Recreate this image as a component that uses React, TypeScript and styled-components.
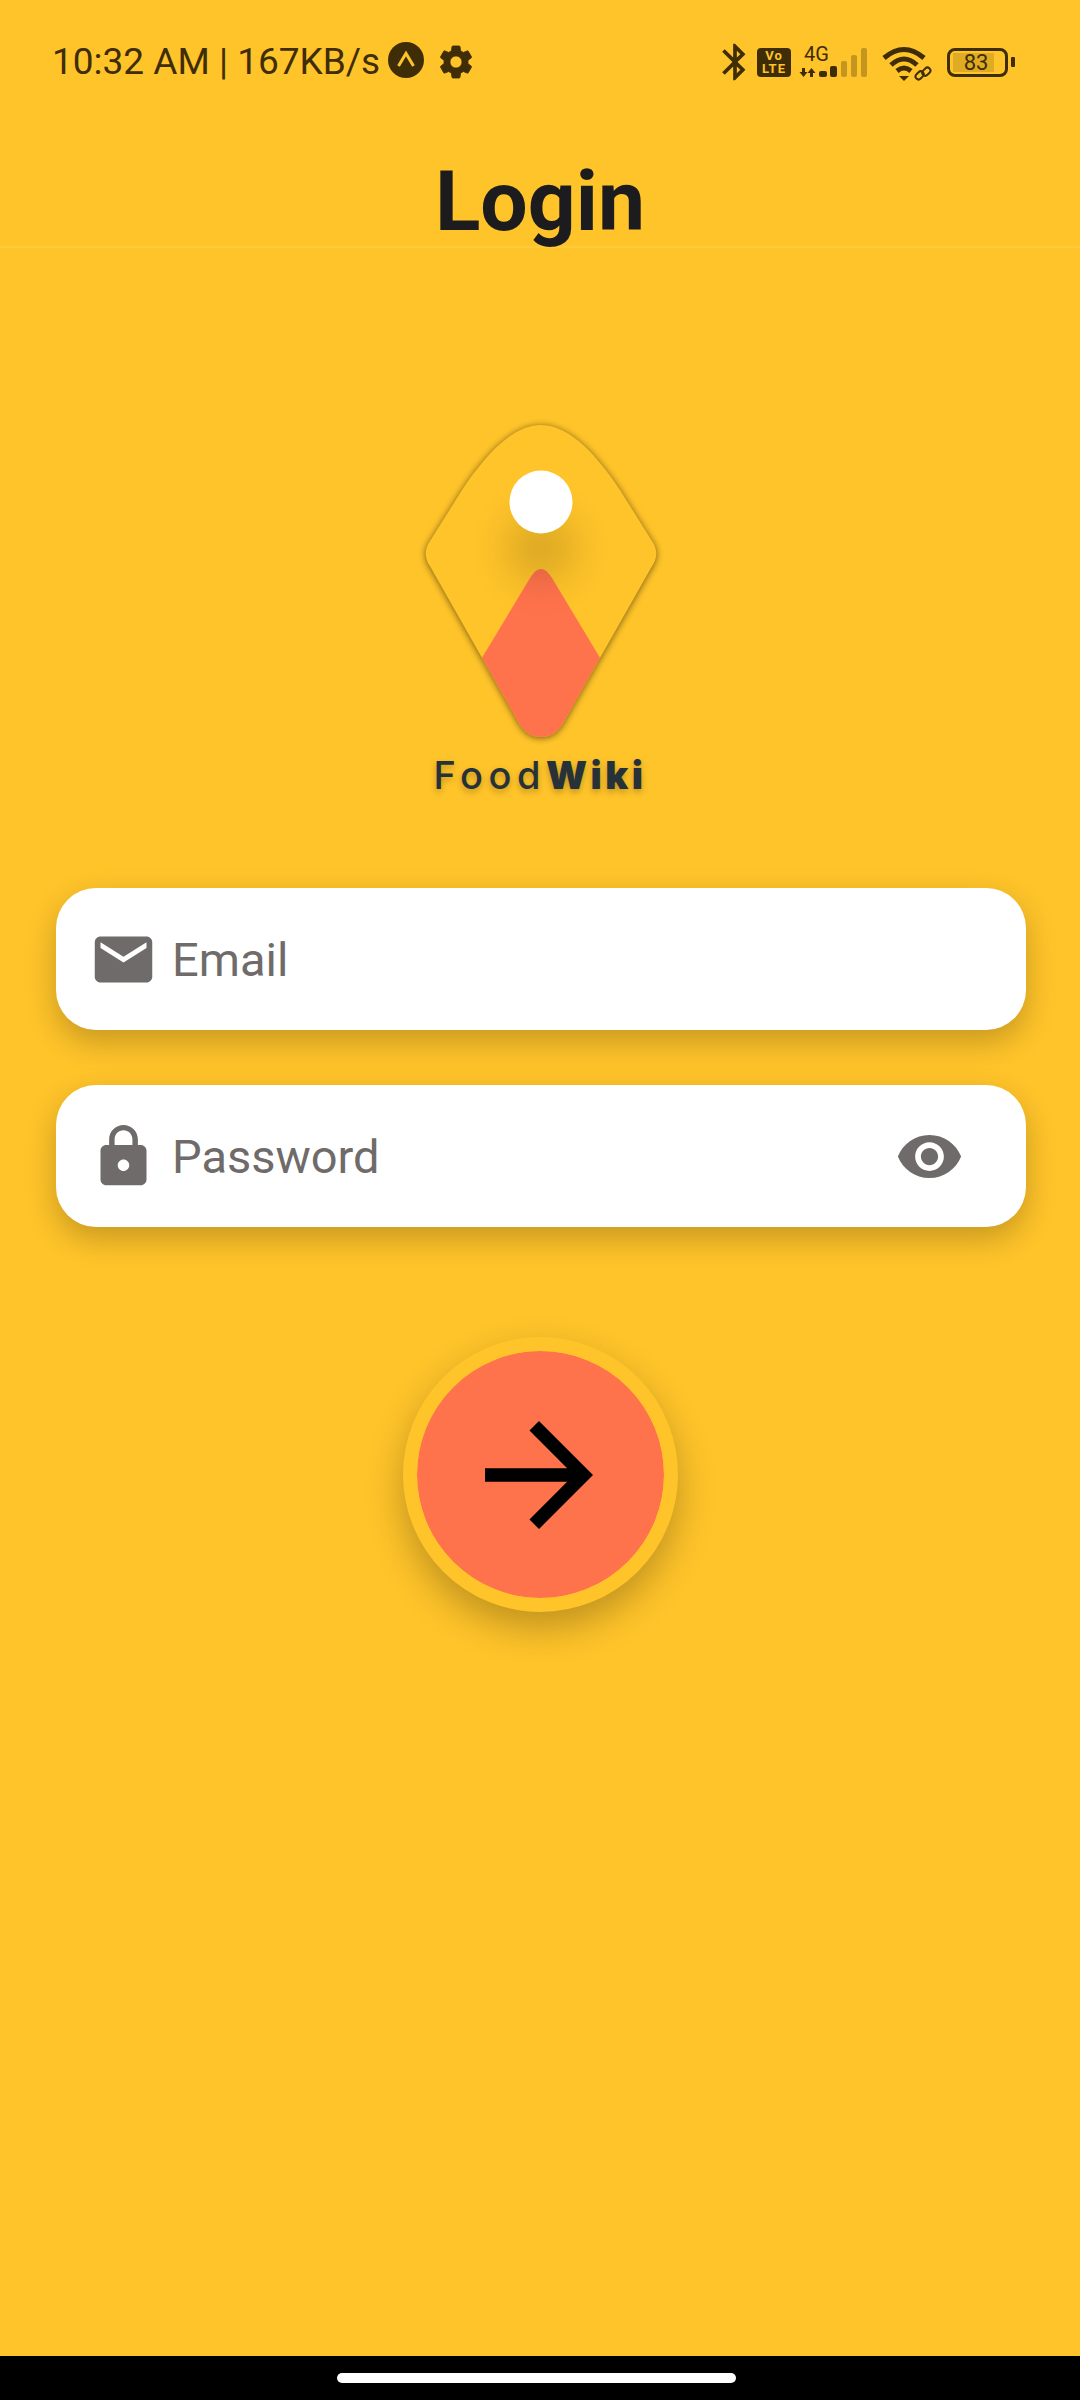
import React from "react";
import styled, { createGlobalStyle } from "styled-components";

const GlobalStyle = createGlobalStyle`
  html, body {
    margin: 0;
    padding: 0;
    background: #ffc42a;
    font-family: Roboto, "Liberation Sans", sans-serif;
  }
`;

const Page = styled.div`
  width: 1080px;
  height: 2400px;
  display: flex;
  flex-direction: column;
  overflow: hidden;
  background: #ffc42a;
`;

const StatusBar = styled.div`
  height: 124px;
  flex: none;
  display: flex;
  align-items: center;
  justify-content: space-between;
  padding: 0 65px 0 52px;
  color: #3f2d08;
`;

const StatusLeft = styled.div`
  display: flex;
  align-items: center;
`;

const StatusTime = styled.span`
  font-size: 37px;
  line-height: 44px;
  white-space: nowrap;
`;

const ExpoBadge = styled.svg`
  width: 36px;
  height: 36px;
  margin: 0 0 4px 8px;
`;

const GearIcon = styled.svg`
  width: 40px;
  height: 40px;
  margin: 0 0 0 12px;
  fill: #3f2d08;
  stroke: #3f2d08;
  stroke-width: 0.5;
`;

const StatusRight = styled.div`
  display: flex;
  align-items: center;
`;

const BluetoothIcon = styled.svg`
  width: 44px;
  height: 44px;
  fill: #3f2d08;
`;

const VoLteBadge = styled.div`
  width: 34px;
  height: 29px;
  border-radius: 4px;
  background: #3f2d08;
  color: #ffc42a;
  display: flex;
  flex-direction: column;
  align-items: center;
  justify-content: center;
  font-size: 13px;
  line-height: 13px;
  font-weight: 700;
  letter-spacing: 1px;
`;

const NetworkIcon = styled.svg`
  width: 70px;
  height: 38px;
  margin-left: 8px;
`;

const WifiIcon = styled.svg`
  width: 52px;
  height: 38px;
  margin-left: 11px;
`;

const Battery = styled.div`
  width: 61px;
  height: 29px;
  box-sizing: border-box;
  margin-left: 15px;
  border: 3.5px solid #3f2d08;
  border-radius: 8px;
  padding: 2px 0 2px 2.5px;
  display: flex;
`;

const BatteryLevel = styled.div`
  width: 41px;
  box-sizing: border-box;
  padding-left: 6px;
  background: rgba(63, 45, 8, 0.17);
  display: flex;
  align-items: center;
  justify-content: center;
  font-size: 22px;
  color: #3f2d08;
`;

const BatteryNub = styled.div`
  width: 4px;
  height: 10px;
  margin-left: 3px;
  border-radius: 1px;
  background: #3f2d08;
`;

const Header = styled.header`
  height: 124px;
  flex: none;
  box-sizing: border-box;
  display: flex;
  justify-content: center;
  border-bottom: 2px solid #ffca3c;
`;

const Title = styled.h1`
  margin: 36px 0 0;
  font-size: 84px;
  line-height: 84px;
  font-weight: 700;
  color: #1c1c1e;
`;

const LogoBlock = styled.div`
  margin-top: 162px;
  display: flex;
  flex-direction: column;
  align-items: center;
`;

const LogoMark = styled.svg`
  width: 260px;
  height: 340px;
  display: block;
`;

const Brand = styled.div`
  margin-top: 3px;
  font-family: Inter, Lato, sans-serif;
  font-size: 38px;
  line-height: 44px;
  font-weight: 500;
  letter-spacing: 5.5px;
  color: #263238;
  text-shadow: 0 3px 6px rgba(0, 0, 0, 0.25);
`;

const BrandBold = styled.b`
  font-weight: 900;
  letter-spacing: 3.5px;
`;

const Form = styled.form`
  margin: 91px 54px 0 56px;
  display: flex;
  flex-direction: column;
  gap: 55px;
`;

const Field = styled.div`
  height: 142px;
  border-radius: 40px;
  background: #fff;
  box-shadow: 0 12px 30px rgba(0, 0, 0, 0.22);
  display: flex;
  align-items: center;
  padding: 0 62px 0 33px;
`;

const FieldIcon = styled.svg`
  width: 69px;
  height: 69px;
  flex: none;
  fill: #6f6b6a;
`;

const FieldInput = styled.input`
  flex: 1;
  min-width: 0;
  margin-left: 14px;
  border: 0;
  padding: 0;
  outline: 0;
  background: transparent;
  font-family: Roboto, sans-serif;
  font-size: 47px;
  color: #6f6b6a;

  &::placeholder {
    color: #6f6b6a;
    opacity: 1;
  }
`;

const SubmitButton = styled.button`
  width: 275px;
  height: 275px;
  box-sizing: border-box;
  margin: 110px auto 0;
  padding: 0 3px 0 0;
  border: 14px solid #ffc42a;
  border-radius: 50%;
  background: #ff734c;
  background-clip: padding-box;
  box-shadow: 0 16px 36px rgba(0, 0, 0, 0.25);
  display: flex;
  align-items: center;
  justify-content: center;
  align-self: center;
`;

const ArrowIcon = styled.svg`
  width: 162px;
  height: 162px;
  flex: none;
  fill: #000;
`;

const NavBar = styled.div`
  height: 44px;
  flex: none;
  margin-top: auto;
  background: #000;
  display: flex;
  justify-content: center;
  padding: 17px 7px 0 0;
  box-sizing: border-box;
`;

const NavPill = styled.div`
  width: 399px;
  height: 10px;
  border-radius: 5px;
  background: #fff;
`;

const bodyPath =
  "M541 425C572 425 600 460 620 490L652 541Q661 554 651 568L562 725C556 734 549 737 541 737C533 737 526 734 520 725L431 568Q421 554 430 541L462 490C482 460 510 425 541 425Z";

const App = () => {
  return (
    <Page>
      <GlobalStyle />
      <StatusBar>
        <StatusLeft>
          <StatusTime>10:32 AM | 167KB/s</StatusTime>
          <ExpoBadge viewBox="0 0 36 36">
            <circle cx="18" cy="18" r="18" fill="#3f2d08" />
            <path
              d="M10.5 24L18 11.5L25.5 24"
              fill="none"
              stroke="#ffc42a"
              strokeWidth="3"
            />
          </ExpoBadge>
          <GearIcon viewBox="0 0 24 24">
            <path d="M19.14 12.94c.04-.3.06-.61.06-.94 0-.32-.02-.64-.07-.94l2.03-1.58c.18-.14.23-.41.12-.61l-1.92-3.32c-.12-.22-.37-.29-.59-.22l-2.39.96c-.5-.38-1.03-.7-1.62-.94l-.36-2.54c-.04-.24-.24-.41-.48-.41h-3.84c-.24 0-.43.17-.47.41l-.36 2.54c-.59.24-1.13.57-1.62.94l-2.39-.96c-.22-.08-.47 0-.59.22L2.74 8.87c-.12.21-.08.47.12.61l2.03 1.58c-.05.3-.09.63-.09.94s.02.64.07.94l-2.03 1.58c-.18.14-.23.41-.12.61l1.92 3.32c.12.22.37.29.59.22l2.39-.96c.5.38 1.03.7 1.62.94l.36 2.54c.05.24.24.41.48.41h3.84c.24 0 .44-.17.47-.41l.36-2.54c.59-.24 1.13-.56 1.62-.94l2.39.96c.22.08.47 0 .59-.22l1.92-3.32c.12-.22.07-.47-.12-.61l-2.01-1.58zM12 15.6c-1.98 0-3.6-1.62-3.6-3.6s1.62-3.6 3.6-3.6 3.6 1.62 3.6 3.6-1.62 3.6-3.6 3.6z" />
          </GearIcon>
        </StatusLeft>
        <StatusRight>
          <BluetoothIcon viewBox="0 0 24 24">
            <path d="M17.71 7.71L12 2h-1v7.59L6.41 5 5 6.41 10.59 12 5 17.59 6.41 19 11 14.41V22h1l5.71-5.71-4.3-4.29 4.3-4.29zM13 5.83l1.88 1.88L13 9.59V5.83zm1.88 10.46L13 18.17v-3.76l1.88 1.88z" />
          </BluetoothIcon>
          <VoLteBadge>
            <span>Vo</span>
            <span>LTE</span>
          </VoLteBadge>
          <NetworkIcon viewBox="799 40 70 38">
            <text x="804" y="58" fontFamily="Roboto" fontSize="20" fill="#3f2d08">
              4G
            </text>
            <path
              d="M802 65h3v4h2.5l-4 5-4-5h2.5zM810 74h3v-4h2.5l-4-5-4 5h2.5z"
              fill="#3f2d08"
            />
            <rect x="819" y="68" width="8" height="6" rx="2" fill="#3f2d08" />
            <rect x="830" y="63" width="7" height="11" rx="2" fill="#3f2d08" />
            <g fill="#3f2d08" opacity="0.3">
              <rect x="841" y="58" width="6" height="16" rx="2" />
              <rect x="851" y="52" width="6" height="22" rx="2" />
              <rect x="861" y="45" width="6" height="29" rx="2" />
            </g>
          </NetworkIcon>
          <WifiIcon viewBox="880 40 52 38">
            <g fill="none" stroke="#3f2d08" strokeWidth="5">
              <path d="M884 55Q904 38 924 55" />
              <path d="M891 62Q904 50 917 62" />
              <path d="M897 68Q904 62 911 68" />
            </g>
            <path d="M899 73L909 73L904 78Z" fill="#3f2d08" />
            <g fill="none" stroke="#3f2d08" strokeWidth="2">
              <rect x="915" y="69" width="9" height="6" rx="3" transform="rotate(-45 920 72)" />
              <rect x="922" y="66" width="9" height="6" rx="3" transform="rotate(-45 926 69)" />
            </g>
          </WifiIcon>
          <Battery>
            <BatteryLevel>83</BatteryLevel>
          </Battery>
          <BatteryNub />
        </StatusRight>
      </StatusBar>

      <Header>
        <Title>Login</Title>
      </Header>

      <LogoBlock>
        <LogoMark viewBox="410 410 260 340">
          <defs>
            <filter id="bodyShadow" x="-20%" y="-20%" width="140%" height="140%">
              <feGaussianBlur stdDeviation="3.5" />
            </filter>
            <filter id="dotShadow" x="-100%" y="-100%" width="300%" height="300%">
              <feGaussianBlur stdDeviation="20" />
            </filter>
            <clipPath id="bodyClip">
              <path d={bodyPath} />
            </clipPath>
          </defs>
          <path
            d={bodyPath}
            fill="#000"
            opacity="0.55"
            filter="url(#bodyShadow)"
            transform="translate(0 1)"
          />
          <path d={bodyPath} fill="#ffc42a" />
          <g clipPath="url(#bodyClip)">
            <path
              d="M530 578Q541 560 552 578L620 691L620 760L462 760L462 691Z"
              fill="#ff734c"
            />
            <circle cx="541" cy="548" r="34" fill="#000" opacity="0.15" filter="url(#dotShadow)" />
          </g>
          <circle cx="541" cy="502" r="31.5" fill="#fff" />
        </LogoMark>
        <Brand>
          Food<BrandBold>Wiki</BrandBold>
        </Brand>
      </LogoBlock>

      <Form>
        <Field>
          <FieldIcon viewBox="0 0 24 24">
            <path d="M20 4H4c-1.1 0-1.99.9-1.99 2L2 18c0 1.1.9 2 2 2h16c1.1 0 2-.9 2-2V6c0-1.1-.9-2-2-2zm0 4l-8 5-8-5V6l8 5 8-5v2z" />
          </FieldIcon>
          <FieldInput type="email" placeholder="Email" />
        </Field>
        <Field>
          <FieldIcon viewBox="0 0 24 24">
            <path d="M18 8h-1V6c0-2.76-2.24-5-5-5S7 3.24 7 6v2H6c-1.1 0-2 .9-2 2v10c0 1.1.9 2 2 2h12c1.1 0 2-.9 2-2V10c0-1.1-.9-2-2-2zm-6 9c-1.1 0-2-.9-2-2s.9-2 2-2 2 .9 2 2-.9 2-2 2zm3.1-9H8.9V6c0-1.71 1.39-3.1 3.1-3.1 1.71 0 3.1 1.39 3.1 3.1v2z" />
          </FieldIcon>
          <FieldInput type="password" placeholder="Password" />
          <FieldIcon viewBox="0 0 24 24">
            <path d="M12 4.5C7 4.5 2.73 7.61 1 12c1.73 4.39 6 7.5 11 7.5s9.27-3.11 11-7.5c-1.73-4.39-6-7.5-11-7.5zM12 17c-2.76 0-5-2.24-5-5s2.24-5 5-5 5 2.24 5 5-2.24 5-5 5zm0-8c-1.66 0-3 1.34-3 3s1.34 3 3 3 3-1.34 3-3-1.34-3-3-3z" />
          </FieldIcon>
        </Field>
      </Form>

      <SubmitButton type="button">
        <ArrowIcon viewBox="0 0 24 24">
          <path d="M12 4l-1.41 1.41L16.17 11H4v2h12.17l-5.58 5.59L12 20l8-8z" />
        </ArrowIcon>
      </SubmitButton>

      <NavBar>
        <NavPill />
      </NavBar>
    </Page>
  );
};

export default App;
